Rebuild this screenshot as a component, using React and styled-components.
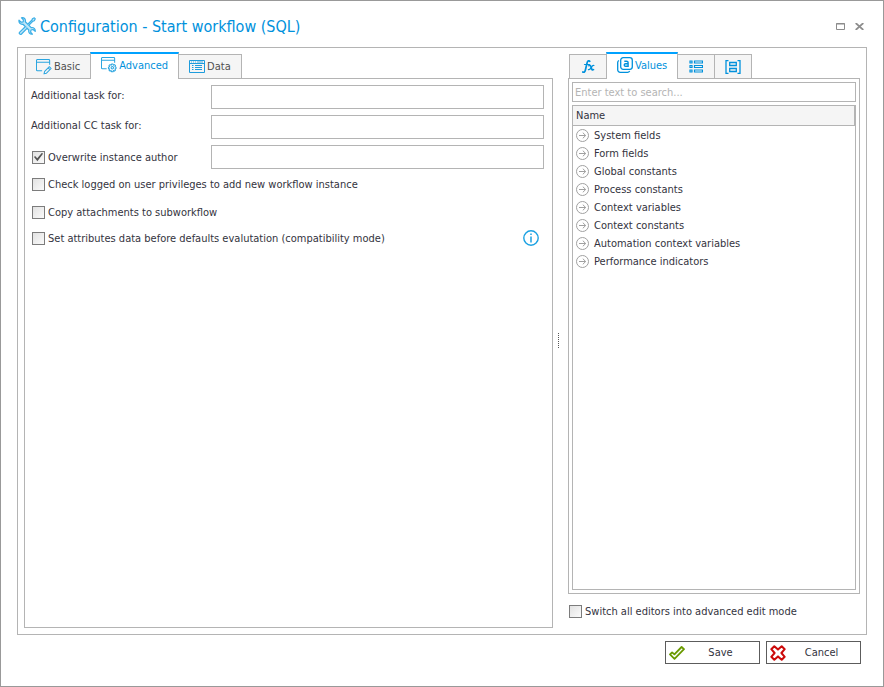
import React, { useState } from "react";
import styled, { createGlobalStyle } from "styled-components";

const App = () => {
  const [tab, setTab] = useState('Advanced');
  const [sideTab, setSideTab] = useState('Values');

  return (
    <Window>
      <GlobalStyle />
      <TitleBar>
        <ToolsIcon />
        <Title>Configuration - Start workflow (SQL)</Title>
        <WindowButton aria-label="Maximize">
          <svg width="9" height="7" viewBox="0 0 9 7"><path d="M.5 .5h8v6h-8zM0 1h9" fill="none" stroke="#8c8c8c" /></svg>
        </WindowButton>
        <WindowButton aria-label="Close">
          <svg width="9" height="7" viewBox="0 0 9 7"><path d="M.7 0l7.600 7M8.300 0l-7.600 7" fill="none" stroke="#8c8c8c" strokeWidth="1.700" /></svg>
        </WindowButton>
      </TitleBar>

      <Frame>
        <MainColumn>
          <TabStrip role="tablist">
            {mainTabs.map(({ name, Icon }) => (
              <Tab key={name} role="tab" aria-selected={tab === name} $active={tab === name} onClick={() => setTab(name)}>
                <Icon />
                {name}
              </Tab>
            ))}
          </TabStrip>
          <FormPanel>
            <Fields>
              <FieldLabel htmlFor="task">Additional task for:</FieldLabel>
              <TextInput id="task" />
              <FieldLabel htmlFor="ccTask">Additional CC task for:</FieldLabel>
              <TextInput id="ccTask" />
              <CheckLabel><CheckBox defaultChecked />Overwrite instance author</CheckLabel>
              <TextInput aria-label="Instance author" />
            </Fields>
            <Options>
              <CheckLabel><CheckBox />Check logged on user privileges to add new workflow instance</CheckLabel>
              <CheckLabel><CheckBox />Copy attachments to subworkflow</CheckLabel>
            </Options>
            <OptionRow>
              <CheckLabel><CheckBox />Set attributes data before defaults evalutation (compatibility mode)</CheckLabel>
              <InfoButton aria-label="Information">
                <svg width="16" height="16" viewBox="0 0 16 16" fill="none" stroke="#1ba1e2">
                  <circle cx="8" cy="8" r="7.200" strokeWidth="1.400" />
                  <path d="M8 6.500v6M8 3.500v1.600" strokeWidth="1.500" />
                </svg>
              </InfoButton>
            </OptionRow>
          </FormPanel>
        </MainColumn>

        <Splitter role="separator" aria-orientation="vertical">
          <Grip />
        </Splitter>

        <SideColumn>
          <TabStrip role="tablist">
            {sideTabs.map(({ name, Icon, iconOnly }) => (
              <Tab key={name} role="tab" aria-label={name} aria-selected={sideTab === name} $active={sideTab === name} $iconOnly={iconOnly} onClick={() => setSideTab(name)}>
                <Icon />
                {!iconOnly && name}
              </Tab>
            ))}
          </TabStrip>
          <SidePanel>
            <SearchInput type="search" aria-label="Search" placeholder="Enter text to search..." />
            <Tree>
              <TreeHeader>Name</TreeHeader>
              <TreeList>
                {groups.map(group => (
                  <TreeItem key={group}>
                    <ArrowIcon />
                    {group}
                  </TreeItem>
                ))}
              </TreeList>
            </Tree>
          </SidePanel>
          <SideFooter>
            <CheckLabel><CheckBox />Switch all editors into advanced edit mode</CheckLabel>
          </SideFooter>
        </SideColumn>
      </Frame>

      <Footer>
        <DialogButton><SaveIcon /><span>Save</span></DialogButton>
        <DialogButton><CancelIcon /><span>Cancel</span></DialogButton>
      </Footer>
    </Window>
  );
};

const ToolsIcon = () => (
  <svg width="18" height="18" viewBox="0 0 18 18" fill="none" stroke="#3aaee6" strokeWidth="1.200" strokeLinejoin="round">
    <path d="M1 3.200L3.200 5.200 5.200 4.800 5.400 2.800 3.500 .8C6 .2 8 2 7.300 4.800L13.200 10.600C15.600 10 17.600 12 17.200 14.300L15 12.500 13 13 12.600 15.200 14.400 17.200C11.800 17.500 10.200 15.500 10.800 13L5 7.300C2.500 7.800 .5 5.800 1 3.200z" fill="#bfe6f8" />
    <path d="M10 7l4-4 .4-1.300L16.300.8l1 1-1 2-1.300.4-4 4M7.500 9.500l-5.800 5.600a1.300 1.300 0 0 0 1.800 1.900L9.300 11.200" fill="#bfe6f8" />
  </svg>
);

const EditIcon = () => (
  <svg width="16" height="16" viewBox="0 0 17 17" fill="none" stroke="#2ba5e0" strokeWidth="1.100" strokeLinejoin="round">
    <path d="M6.500 12.500h-5a1 1 0 0 1-1-1v-10a1 1 0 0 1 1-1h12a1 1 0 0 1 1 1v4.500M.5 3.500h14" />
    <path d="M8.500 15.800l.7-2.600 5-5 1.900 1.900-5 5zM12.900 9.500l1.900 1.900" />
  </svg>
);

const SettingsIcon = () => (
  <svg width="16" height="16" viewBox="0 0 17 17" fill="none" stroke="#2ba5e0" strokeWidth="1.100" strokeLinejoin="round">
    <path d="M6 12.500H1.500a1 1 0 0 1-1-1v-10a1 1 0 0 1 1-1h12a1 1 0 0 1 1 1v4.500M.5 3.500h14" />
    <path d="M11.200 7.500h1.600l.3 1.200 1.200-.6 1.100 1.100-.6 1.200 1.200.4v1.500l-1.200.4.6 1.200-1.100 1.100-1.200-.6-.3 1.300h-1.600l-.4-1.300-1.200.6-1.100-1.100.6-1.200-1.200-.4v-1.500l1.200-.4-.6-1.200 1.100-1.100 1.200.6z" />
    <circle cx="12" cy="11.500" r="1.300" />
  </svg>
);

const DataIcon = () => (
  <svg width="16" height="13" viewBox="0 0 16 13" fill="none" stroke="#1e9cdc">
    <path d="M.5 .5h15v12H.5zM.5 3.500h15" />
    <path d="M2 2h1M4 2h1M6 2h1M8 2h6" strokeWidth=".8" />
    <path d="M3 5.500h1.500M6 5.500h7M3 7.500h1.500M6 7.500h7M3 9.500h1.500M6 9.500h7" />
  </svg>
);

const FunctionIcon = () => (
  <svg width="13" height="13" viewBox="0 0 13 13" fill="none" stroke="#0091dc" strokeLinecap="round">
    <path d="M7.800 1.300C6.600 .2 5.500 1 5 3.200L3.400 10C3 12 1.800 12.800.8 12" strokeWidth="1.700" />
    <path d="M2.500 4.500h5" strokeWidth="1.200" />
    <path d="M7 5.600c1.400-.7 1.800.2 2.300 2.200.5 2 1 2.600 2.200 1.800" strokeWidth="1.700" />
    <path d="M11.900 5.500c-1-.4-1.800.5-2.600 1.900S7.700 10.200 6.400 9.600" strokeWidth="1.200" />
  </svg>
);

const ValuesIcon = () => (
  <svg width="16" height="16" viewBox="0 0 16 16" fill="none" stroke="#0091dc" strokeWidth="1.300">
    <rect x="3.700" y=".7" width="11.600" height="11.600" rx="2.500" />
    <path d="M2 3.500C1 4 .7 4.600 .7 5.500v7.300a2.500 2.500 0 0 0 2.500 2.500h7.300c1 0 1.700-.4 2.200-1.300" />
    <path d="M7.300 4.200h2.200c1.100 0 1.600.5 1.600 1.400v3.700H8.500c-1.700 0-1.700-2.500 0-2.500h2.500" strokeWidth="1.400" />
  </svg>
);

const ListIcon = () => (
  <svg width="14" height="13" viewBox="0 0 14 13" fill="none" stroke="#0091dc">
    <path d="M1 1h2v2H1zM1 5.500h2v2H1zM1 10h2v2H1zM5.500 1h8v2h-8zM5.500 5.500h8v2h-8zM5.500 10h8v2h-8z" strokeWidth="1.200" />
  </svg>
);

const BracketsIcon = () => (
  <svg width="16" height="14" viewBox="0 0 16 14" fill="none" stroke="#0091dc" strokeWidth="1.300">
    <path d="M3.500 .7H1v12.600h2.500M12.500 .7H15v12.600h-2.500" />
    <path d="M4.700 2.500h6.600v3H4.700zM4.700 8.500h6.600v3H4.700z" />
  </svg>
);

const ArrowIcon = () => (
  <svg width="13" height="13" viewBox="0 0 13 13" fill="none" stroke="#a0a0a0">
    <circle cx="6.500" cy="6.500" r="6" />
    <path d="M3 6.500h6.500M6.800 3.700l2.900 2.800-2.900 2.800" />
  </svg>
);

const SaveIcon = () => (
  <svg width="16" height="14" viewBox="0 0 16 14" fill="none" stroke="#6a9a00" strokeWidth="1.800" strokeLinejoin="round">
    <path d="M1 8.400l2.100-2 2.300 2L12.600 1l2.400 2.200-9.500 9.700z" />
  </svg>
);

const CancelIcon = () => (
  <svg width="16" height="16" viewBox="0 0 16 16" fill="none" stroke="#cc0a0a" strokeWidth="2" strokeLinejoin="round">
    <path d="M4.300 1.200L8 4.600l3.700-3.400 3 3L11.400 8l3.300 3.800-3 3L8 11.400l-3.700 3.400-3-3L4.600 8 1.300 4.200z" />
  </svg>
);

const mainTabs = [
  { name: 'Basic', Icon: EditIcon },
  { name: 'Advanced', Icon: SettingsIcon },
  { name: 'Data', Icon: DataIcon },
];

const sideTabs = [
  { name: 'Functions', Icon: FunctionIcon, iconOnly: true },
  { name: 'Values', Icon: ValuesIcon },
  { name: 'Lists', Icon: ListIcon, iconOnly: true },
  { name: 'Objects', Icon: BracketsIcon, iconOnly: true },
];

const groups = [
  'System fields',
  'Form fields',
  'Global constants',
  'Process constants',
  'Context variables',
  'Context constants',
  'Automation context variables',
  'Performance indicators',
];

const GlobalStyle = createGlobalStyle`
  * { box-sizing: border-box; }
  body {
    margin: 0;
    background: #fff;
  }
  body, button, input {
    font-family: "DejaVu Sans Condensed", Tahoma, sans-serif;
    font-size: 11px;
    color: #333340;
  }
  svg { flex-shrink: 0; }
`
const Window = styled.main`
  display: flex;
  flex-direction: column;
  min-height: 100vh;
  padding: 0 16px;
  border: 1px solid #999;
`
const TitleBar = styled.header`
  display: flex;
  align-items: center;
  gap: 4px;
  height: 46px;
  padding: 4px 0 0 1px;
`
const Title = styled.h1`
  flex: 1;
  margin: 0;
  color: #0091dc;
  font-size: 16px;
  font-weight: normal;
`
const WindowButton = styled.button`
  display: flex;
  justify-content: center;
  width: 15px;
  padding: 0;
  border: none;
  background: none;
`
const Frame = styled.section`
  display: flex;
  flex: 1;
  padding: 4px 6px 6px;
  border: 1px solid #b4b4b4;
`
const MainColumn = styled.div`
  display: flex;
  flex-direction: column;
  flex: 1;
`
const SideColumn = styled.aside`
  display: flex;
  flex-direction: column;
  width: 292px;
`
const TabStrip = styled.div`
  display: flex;
  align-items: flex-end;
  height: 26px;
  padding-left: 1px;
`
const Tab = styled.button`
  display: flex;
  align-items: center;
  justify-content: center;
  gap: 2px;
  height: ${p => p.$active ? 27 : 24}px;
  min-width: ${p => p.$iconOnly ? 38 : 0}px;
  padding: 0 10px;
  margin-right: -1px;
  margin-bottom: ${p => p.$active ? -1 : 0}px;
  border: 1px solid #b4b4b4;
  border-bottom: none;
  background: #f5f5f5;
  color: #505050;
  position: relative;

  ${p => p.$active && `
    z-index: 1;
    padding-bottom: 3px;
    border-top: 2px solid #00a2ff;
    background: #fff;
    color: #0091dc;
  `}
`
const FormPanel = styled.div`
  flex: 1;
  padding: 6px 8px 8px 6px;
  border: 1px solid #b4b4b4;
`
const Fields = styled.div`
  display: grid;
  grid-template-columns: 180px 1fr;
  row-gap: 6px;
  align-items: center;
`
const FieldLabel = styled.label`
  padding-bottom: 4px;
`
const TextInput = styled.input`
  width: 100%;
  height: 24px;
  padding: 0 4px;
  border: 1px solid #b4b4b4;
  background: #fff;
`
const CheckLabel = styled.label`
  display: flex;
  align-items: center;
  gap: 3px;
  padding-left: 1px;
  white-space: nowrap;
`
const CheckBox = styled.input.attrs({ type: 'checkbox' })`
  appearance: none;
  flex-shrink: 0;
  width: 13px;
  height: 13px;
  margin: 0;
  border: 1px solid #7c7c7c;
  background: linear-gradient(135deg, #e2e2e2, #fafafa);

  &:checked::after {
    content: "";
    display: block;
    width: 9px;
    height: 9px;
    margin: 1px;
    background: #555;
    clip-path: polygon(0 50%, 12% 38%, 36% 64%, 88% 4%, 100% 14%, 38% 96%);
  }
`
const Options = styled.div`
  display: flex;
  flex-direction: column;
  gap: 15px;
  margin-top: 9px;
`
const OptionRow = styled.div`
  display: flex;
  align-items: center;
  justify-content: space-between;
  margin-top: 11px;
  padding-right: 5px;
`
const InfoButton = styled.button`
  display: flex;
  padding: 0;
  border: none;
  background: none;
`
const Splitter = styled.div`
  display: flex;
  align-items: center;
  width: 15px;
  padding-left: 5px;
`
const Grip = styled.div`
  width: 1px;
  height: 15px;
  background: repeating-linear-gradient(#555 0 1px, transparent 1px 2px);
`
const SidePanel = styled.div`
  display: flex;
  flex-direction: column;
  flex: 1;
  gap: 3px;
  padding: 3px;
  border: 1px solid #b4b4b4;
`
const SearchInput = styled(TextInput)`
  height: 20px;
  padding: 0 2px;

  &::placeholder {
    color: #b4b4b4;
  }
`
const Tree = styled.div`
  flex: 1;
  border: 1px solid #b4b4b4;
`
const TreeHeader = styled.div`
  height: 20px;
  padding-left: 3px;
  border-right: 1px solid #b4b4b4;
  border-bottom: 1px solid #b4b4b4;
  background: #f5f5f5;
  line-height: 19px;
`
const TreeList = styled.ul`
  margin: 0;
  padding: 0 0 0 3px;
  list-style: none;
`
const TreeItem = styled.li`
  display: flex;
  align-items: center;
  gap: 5px;
  height: 18px;
`
const SideFooter = styled.div`
  display: flex;
  align-items: center;
  height: 34px;
`
const Footer = styled.footer`
  display: flex;
  justify-content: flex-end;
  gap: 6px;
  height: 51px;
  padding: 6px 6px 0 0;
`
const DialogButton = styled.button`
  display: flex;
  align-items: center;
  width: 95px;
  height: 23px;
  padding: 0 3px;
  border: 1px solid #5c5c5c;
  background: #fff;

  span {
    flex: 1;
    text-align: center;
  }
`

export default App;
